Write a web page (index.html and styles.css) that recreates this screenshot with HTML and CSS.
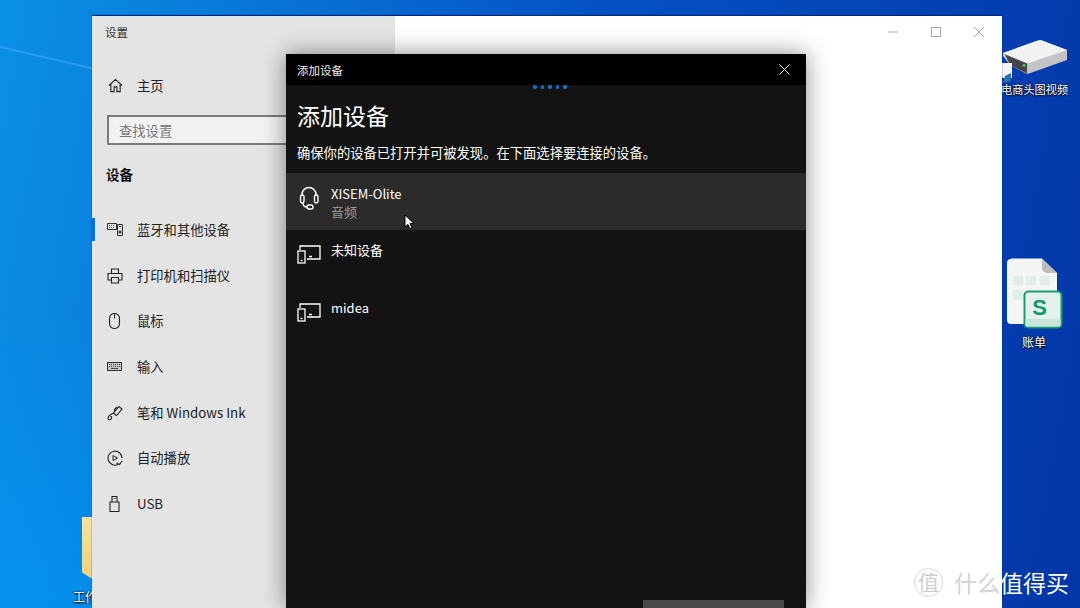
FILE: index.html
```html
<!DOCTYPE html>
<html lang="zh-CN">
<head>
    <meta charset="UTF-8">
    <title>添加设备</title>
    <link rel="stylesheet" href="styles.css">
</head>
<body>
    <div class="desktop">
        <div class="beam"></div>

        <!-- 桌面图标 -->
        <div class="folder"></div>
        <div class="desk-label label-work">工作</div>

        <div class="desk-icon icon-drive">
            <svg width="66" height="36" viewBox="0 0 66 36">
                <path d="M1 14 L36 1.500 Q38 1 40 1.500 L65 11 V21 L27 34.500 Q25 35 23 34 L8 26 L1 17 Z" fill="#c4c4c8"/>
                <path d="M1 14 L36 1.500 Q38 1 40 1.500 L65 11 L27 24 Q25 24.500 23 23.500 Z" fill="#f2f2f4"/>
                <path d="M3 15.500 L25 24.500 V34.500 L8 26 Z" fill="#45454a"/>
                <circle cx="22" cy="26.500" r="1.400" fill="#27e04a"/>
            </svg>
        </div>
        <div class="desk-shortcut">
            <svg width="8" height="11" viewBox="0 0 8 11"><path d="M0 10 L2 3 L8 0 L8 8 Z" fill="#2b6cb5"/></svg>
        </div>
        <div class="desk-label label-drive">电商头图视频</div>

        <div class="desk-icon icon-sheet">
            <svg width="58" height="72" viewBox="0 0 58 72">
                <path d="M5 0.500 H36 L51 15 V62 a4 4 0 0 1 -4 4 H5 a4 4 0 0 1 -4 -4 V5 a4 4 0 0 1 4 -4 Z" fill="#f4f6f6"/>
                <path d="M36 0.500 L51 15 H41 a5 5 0 0 1 -5 -5 Z" fill="#bdbdbd"/>
                <g fill="#e0eeea">
                    <rect x="7" y="18" width="10" height="9"/>
                    <rect x="20" y="18" width="10" height="9"/>
                    <rect x="34" y="18" width="10" height="9"/>
                    <rect x="7" y="32" width="10" height="10"/>
                </g>
                <rect x="18.500" y="33.500" width="37" height="36" rx="4" fill="#e4f2ed" stroke="#189a6c" stroke-width="2"/>
                <rect x="19.500" y="61" width="35" height="7.500" fill="#c8e5da"/>
                <text x="33.500" y="57" class="sheet-s" text-anchor="middle">S</text>
            </svg>
        </div>
        <div class="desk-label label-sheet">账单</div>

        <!-- 设置窗口 -->
        <div class="settings">
            <aside class="sidebar">
                <div class="win-title">设置</div>
                <div class="home-row">
                    <svg class="side-icon" width="15" height="15" viewBox="0 0 16 16">
                        <path d="M1 8 L8 1.500 L15 8 M3 6.500 V14.500 H6.500 V9.500 H9.500 V14.500 H13 V6.500" fill="none" stroke="#222" stroke-width="1.200"/>
                    </svg>
                    <span>主页</span>
                </div>
                <div class="search">查找设置</div>
                <div class="section-title">设备</div>
                <ul class="nav">
                    <li class="nav-item current">
                        <svg class="side-icon" width="16" height="16" viewBox="0 0 16 16">
                            <path d="M0.500 1.500 H9.500 V7.500 H0.500 Z M10.500 2.500 H15.500 V13.500 H10.500 Z" fill="none" stroke="#333"/>
                            <path d="M2 3.500 H8 M2 5.500 H8" stroke="#555" stroke-dasharray="1 1"/>
                            <circle cx="13" cy="10" r="1.500" fill="#333"/>
                            <path d="M12 4.500 H14" stroke="#333"/>
                        </svg>
                        <span>蓝牙和其他设备</span>
                    </li>
                    <li class="nav-item">
                        <svg class="side-icon" width="16" height="16" viewBox="0 0 16 16">
                            <path d="M4.500 5 V1 H11.500 V5 M4 12 H1 V5.500 H15 V12 H12 M4.500 9.500 H11.500 V15 H4.500 Z" fill="none" stroke="#222" stroke-width="1.100"/>
                        </svg>
                        <span>打印机和扫描仪</span>
                    </li>
                    <li class="nav-item">
                        <svg class="side-icon" width="16" height="16" viewBox="0 0 16 16">
                            <rect x="2.500" y="0.500" width="10" height="15" rx="5" fill="none" stroke="#222" stroke-width="1.100"/>
                            <path d="M7.500 0.500 V5.500" stroke="#222"/>
                        </svg>
                        <span>鼠标</span>
                    </li>
                    <li class="nav-item">
                        <svg class="side-icon" width="16" height="16" viewBox="0 0 16 16">
                            <rect x="0.500" y="3.500" width="14" height="8" fill="#c8c8c8" stroke="#333"/>
                            <path d="M2 5.500 H13 M2 7.500 H13" stroke="#444" stroke-dasharray="1 1"/>
                            <path d="M4 9.500 H11" stroke="#444"/>
                        </svg>
                        <span>输入</span>
                    </li>
                    <li class="nav-item">
                        <svg class="side-icon" width="16" height="16" viewBox="0 0 16 16">
                            <path d="M8 9.500 L6.500 8 L12 1.500 L15 4 L9.500 10.500 Z M10 2 L7.500 4.500 V6.500 M6.500 8 C3 9.500 1 11 1 13.500 C1.500 15.500 4 15 4.500 13 C5 11.500 4 11 3.500 11.500" fill="none" stroke="#222" stroke-width="1.100"/>
                        </svg>
                        <span>笔和 Windows Ink</span>
                    </li>
                    <li class="nav-item">
                        <svg class="side-icon" width="16" height="16" viewBox="0 0 16 16">
                            <path d="M11 14.500 A7 7 0 1 1 15 8 M15 11 L12.500 14.500 L9.500 13" fill="none" stroke="#222" stroke-width="1.100"/>
                            <path d="M6 5.500 L10.500 8 L6 10.500 Z" fill="none" stroke="#222"/>
                        </svg>
                        <span>自动播放</span>
                    </li>
                    <li class="nav-item">
                        <svg class="side-icon" width="16" height="16" viewBox="0 0 16 16">
                            <path d="M3 6 H12 V15.500 H3 Z M5 6 V0.500 H10 V6" fill="none" stroke="#222" stroke-width="1.100"/>
                            <path d="M6.500 2.500 H7.300 M8 2.500 H8.800" stroke="#222"/>
                        </svg>
                        <span>USB</span>
                    </li>
                </ul>
            </aside>
            <main class="content">
                <div class="win-controls">
                    <svg width="10" height="10" viewBox="0 0 10 10"><path d="M0 5 H10" stroke="#aaa"/></svg>
                    <svg width="10" height="10" viewBox="0 0 10 10"><rect x="0.500" y="0.500" width="9" height="9" fill="none" stroke="#aaa"/></svg>
                    <svg width="10" height="10" viewBox="0 0 10 10"><path d="M0 0 L10 10 M10 0 L0 10" stroke="#aaa"/></svg>
                </div>
            </main>
        </div>

        <!-- 添加设备对话框 -->
        <div class="dialog">
            <header class="dlg-bar">
                <span>添加设备</span>
                <svg width="11" height="11" viewBox="0 0 11 11"><path d="M0.500 0.500 L10.500 10.500 M10.500 0.500 L0.500 10.500" stroke="#eee"/></svg>
            </header>
            <div class="progress">
                <i></i><i></i><i></i><i></i><i></i>
            </div>
            <h1 class="dlg-title">添加设备</h1>
            <p class="dlg-hint">确保你的设备已打开并可被发现。在下面选择要连接的设备。</p>
            <div class="dev-list">
                <div class="dev hover">
                    <svg width="24" height="26" viewBox="0 0 24 26">
                        <path d="M5 11 V9.500 a7 7 0 0 1 14 0 V11" fill="none" stroke="#fff" stroke-width="1.500"/>
                        <rect x="3.500" y="10" width="3.500" height="8" rx="1.700" fill="none" stroke="#fff" stroke-width="1.400"/>
                        <rect x="17.500" y="10" width="3.500" height="8" rx="1.700" fill="none" stroke="#fff" stroke-width="1.400"/>
                        <path d="M6 18 C6 21 8 22 10 22" fill="none" stroke="#fff" stroke-width="1.400"/>
                        <rect x="10" y="20" width="6" height="4" rx="2" fill="none" stroke="#fff" stroke-width="1.400"/>
                    </svg>
                    <div class="dev-text">
                        <div>XISEM-Olite</div>
                        <div class="dev-sub">音频</div>
                    </div>
                </div>
                <div class="dev">
                    <svg width="24" height="20" viewBox="0 0 24 20">
                        <path d="M3 5 V1 H23 V14 H10" fill="none" stroke="#fff" stroke-width="1.300"/>
                        <rect x="1" y="6" width="7" height="12" fill="none" stroke="#fff" stroke-width="1.300"/>
                        <path d="M12 11.500 H15 M3.500 15.500 H5.500" stroke="#fff" stroke-width="1.300"/>
                    </svg>
                    <div class="dev-text"><div>未知设备</div></div>
                </div>
                <div class="dev">
                    <svg width="24" height="20" viewBox="0 0 24 20">
                        <path d="M3 5 V1 H23 V14 H10" fill="none" stroke="#fff" stroke-width="1.300"/>
                        <rect x="1" y="6" width="7" height="12" fill="none" stroke="#fff" stroke-width="1.300"/>
                        <path d="M12 11.500 H15 M3.500 15.500 H5.500" stroke="#fff" stroke-width="1.300"/>
                    </svg>
                    <div class="dev-text"><div>midea</div></div>
                </div>
            </div>
            <div class="dlg-button"></div>
        </div>

        <!-- 鼠标 -->
        <svg class="cursor" width="11" height="16" viewBox="0 0 11 16">
            <path d="M1 1 V13 L4 10.500 L6 15 L8 14 L6 9.500 L10 9.500 Z" fill="#fff" stroke="#000"/>
        </svg>

        <!-- 水印 -->
        <div class="watermark">
            <span class="mark-circle">值</span>
            <span class="mark-grey">什么</span><span>值得买</span>
        </div>
    </div>
</body>
</html>
```
FILE: styles.css
```css
* {
    box-sizing: border-box;
}
html, body {
    margin: 0;
    padding: 0;
}
body {
    width: 1080px;
    height: 608px;
    overflow: hidden;
    font-family: "Noto Sans CJK SC", "Liberation Sans", sans-serif;
}
.desktop {
    position: relative;
    width: 1080px;
    height: 608px;
    overflow: hidden;
    background:
        radial-gradient(circle at 40px 608px, rgba(0, 160, 255, 0.5), transparent 300px),
        linear-gradient(100deg, #0a90e8 0%, #0a86e0 9%, #0552c4 50%, #0336a8 100%);
}
.beam {
    position: absolute;
    left: 0;
    top: 46px;
    width: 110px;
    height: 2px;
    background: rgba(120, 200, 255, 0.3);
    transform: rotate(13deg);
    transform-origin: left;
}

/* desktop icons */
.folder {
    position: absolute;
    left: 82px;
    top: 517px;
    width: 12px;
    height: 63px;
    background: linear-gradient(#f6e3a0, #ecd27e);
    clip-path: polygon(0 0, 100% 0, 100% 100%, 0 88%);
}
.desk-icon, .desk-shortcut, .desk-label {
    position: absolute;
}
.desk-label {
    color: #fff;
    font-size: 12px;
    line-height: 16px;
    text-shadow: 0 0 2px #000, 0 1px 2px #000;
    white-space: nowrap;
}
.label-work {
    left: 73px;
    top: 589px;
}
.label-drive {
    left: 1001px;
    top: 81px;
    font-size: 11.200px;
}
.label-sheet {
    left: 1022px;
    top: 334px;
}
.icon-drive {
    left: 1002px;
    top: 39px;
}
.desk-shortcut {
    left: 1002px;
    top: 63px;
    width: 10px;
    height: 15px;
    padding: 2px 1px;
    background: #f2f2f2;
}
.icon-sheet {
    left: 1006px;
    top: 258px;
}
.sheet-s {
    font-family: "Liberation Sans", sans-serif;
    font-weight: 700;
    font-size: 22px;
    fill: #149a68;
}

/* settings window */
.settings {
    position: absolute;
    left: 92px;
    top: 16px;
    width: 910px;
    height: 592px;
    display: flex;
    background: #fff;
    box-shadow: 0 -1px 1px #02287e;
}
.sidebar {
    width: 303px;
    background: #e4e4e4;
    padding: 9px 0 0 13px;
    color: #222;
    font-size: 13.300px;
}
.win-title {
    font-size: 11.500px;
    line-height: 14px;
    color: #333;
}
.home-row {
    display: flex;
    align-items: center;
    gap: 14px;
    margin: 37px 0 0 3px;
    height: 18px;
}
.search {
    width: 260px;
    height: 30px;
    margin: 21px 0 0 2px;
    padding-left: 10px;
    border: 2px solid #7a7a7a;
    background: #f2f2f2;
    color: #777;
    line-height: 28px;
}
.section-title {
    margin: 19px 0 0 1px;
    font-size: 13.500px;
    font-weight: 700;
    line-height: 20px;
    color: #111;
}
.nav {
    list-style: none;
    margin: 23px 0 0 -13px;
    padding: 0;
}
.nav-item {
    display: flex;
    align-items: center;
    gap: 14px;
    height: 45.700px;
    padding-left: 14px;
    border-left: 1px solid transparent;
}
.nav-item span {
    line-height: 18px;
}
.current {
    position: relative;
}
.current::before {
    content: "";
    position: absolute;
    left: -1px;
    top: 11px;
    width: 3px;
    height: 23px;
    background: #0a6fd8;
}
.side-icon {
    flex: none;
}
.content {
    flex: 1;
}
.win-controls {
    display: flex;
    justify-content: flex-end;
    align-items: center;
    gap: 33px;
    height: 32px;
    padding-right: 18px;
}

/* add device dialog */
.dialog {
    position: absolute;
    left: 286px;
    top: 54px;
    width: 520px;
    height: 554px;
    background: #131313;
    color: #fff;
    box-shadow: 0 0 22px rgba(0, 0, 0, 0.45);
}
.dlg-bar {
    display: flex;
    justify-content: space-between;
    align-items: center;
    height: 31px;
    padding: 0 16px 0 11px;
    background: #000;
    font-size: 11.500px;
    color: #eee;
}
.progress {
    display: flex;
    justify-content: center;
    gap: 4px;
    height: 4px;
    padding-left: 8px;
}
.progress i {
    width: 3.500px;
    height: 3.500px;
    border-radius: 50%;
    background: #1173cc;
}
.dlg-title {
    margin: 10px 0 0 11px;
    font-size: 23px;
    font-weight: 400;
    line-height: 32px;
}
.dlg-hint {
    margin: 13px 0 0 11px;
    font-size: 13.300px;
    line-height: 18px;
}
.dev-list {
    margin-top: 11px;
}
.dev {
    display: flex;
    align-items: flex-start;
    gap: 10px;
    height: 57.500px;
    padding: 10px 0 0 11px;
    font-size: 13px;
    line-height: 19px;
}
.dev svg {
    margin-top: 5px;
}
.dev.hover {
    height: 57px;
    padding-top: 11px;
    background: #2b2b2b;
}
.dev.hover svg {
    margin-top: 1px;
}
.dev-sub {
    margin-top: -1px;
    color: #9a9a9a;
}
.dlg-button {
    position: absolute;
    left: 357px;
    bottom: 0;
    width: 141px;
    height: 8px;
    background: #4a4a4a;
}
.cursor {
    position: absolute;
    left: 404px;
    top: 214px;
}

/* watermark */
.watermark {
    position: absolute;
    left: 914px;
    top: 566px;
    display: flex;
    align-items: center;
    font-size: 23px;
    line-height: 32px;
    color: #fff;
    white-space: nowrap;
}
.mark-circle {
    width: 29px;
    height: 29px;
    margin-right: 11px;
    border: 1px solid #d8d8d8;
    border-radius: 50%;
    color: #cfcfcf;
    font-size: 21px;
    line-height: 25px;
    text-align: center;
}
.mark-grey {
    color: #d4d4d4;
}
```
